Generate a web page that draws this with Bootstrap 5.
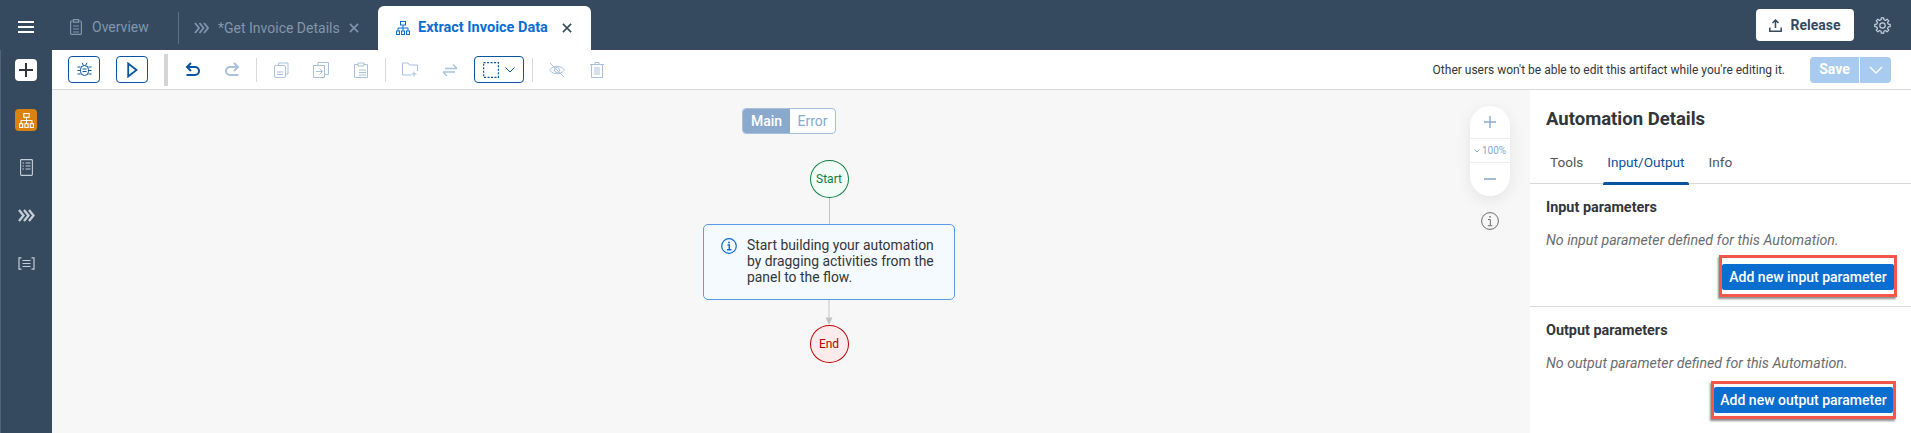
<!DOCTYPE html>
<html lang="en">
<head>
<meta charset="utf-8">
<title>Extract Invoice Data</title>
<link href="https://cdn.jsdelivr.net/npm/bootstrap@5.3.0/dist/css/bootstrap.min.css" rel="stylesheet">
<style>
html,body{height:433px;overflow:hidden}
body{font-family:Roboto,"Liberation Sans",sans-serif;background:#354a5f;color:#32363a;font-size:14px}
svg{display:block;flex:none}
.shell-top{height:50px;background:#354a5f;padding-right:20px}
.burger{width:70px;padding-left:18px;padding-top:4px}
.burger span{display:block;width:16px;height:2px;background:#fff;margin-bottom:3px}
.tab-item{height:50px;display:flex;align-items:center;color:#8196ad;font-size:14px;white-space:nowrap}
.tab-over{width:108px;gap:10px;padding-top:4px}
.tab-get{width:200px;padding-left:15px;border-left:1px solid #5b6f84;height:32px;margin-top:6px;gap:9px}
.tab-get .tx{width:122px}
.tab-live{width:213px;height:44px;margin-top:6px;background:#fff;border-radius:6px 6px 0 0;padding-left:18px;gap:8px;color:#0a6ed1;font-weight:700;align-self:flex-start}
.tab-live .tx{width:136px;color:#0a6ed1;font-size:14.5px}
.rel-btn{width:98px;height:32px;background:#fff;color:#354a5f;font-weight:700;font-size:14px;border:0;border-radius:4px;padding:0;gap:8px;margin-right:20px}
.rel-btn:hover{background:#fff;color:#354a5f}
.side{width:52px;border-left:1px solid #4f6479;padding-left:14px;padding-top:9px;height:383px;flex:none}
.side-plus{width:22px;height:22px;background:#fff;border-radius:4px;margin-bottom:28px}
.side-org{width:22px;height:22px;background:#d9820f;border-radius:4px;margin-bottom:28px}
.side-i{height:16px;width:22px;margin-bottom:32px}
.work{height:383px;background:#f7f7f7;min-width:0}
.tools{height:40px;background:#fff;border-bottom:1px solid #d9d9d9;padding-left:16px;padding-right:20px}
.tb-box{width:32px;height:27px;border:1px solid #0854a0;border-radius:4px;background:#fff;padding:0}
.tb-thick{width:4px;height:32px;background:#d5d5d5;margin:0 17px 0 16px}
.tb-sep{width:1px;height:24px;background:#d9d9d9}
.tb-dd{width:50px;height:27px;border:1px solid #0854a0;border-radius:4px;gap:6px;padding:0;background:#fff}
.sp-25{margin-right:25px}
.sp-24{margin-right:24px}
.sp-17{margin-right:17px}
.sp-16{margin-right:16px}
.sp-8{margin-right:8px}
.note{font-size:12px;margin-right:25px;white-space:nowrap;color:#32363a}
.sv-a{width:49px;height:26px;background:#a9cbef;color:#fff;font-weight:700;font-size:14px;border-radius:4px 0 0 4px}
.sv-b{width:31px;height:26px;background:#a9cbef;border-radius:0 4px 4px 0;margin-left:1px}
.below{height:343px}
.canvas{flex:1;background:#f7f7f7;padding-top:18px}
.seg{width:94px;height:26px;border:1px solid #a8c0dc;border-radius:4px;overflow:hidden;font-size:14px;background:#fff;margin-right:4px}
.seg-on{width:47px;background:#8aa9cd;color:#fff;font-weight:500}
.seg-off{flex:1;color:#8aa9cd}
.flow{margin-left:76px}
.node{width:39px;height:38px;border-radius:50%;font-size:12px;background:#fff}
.node-s{border:1px solid #107e3e;color:#107e3e;background:#f1fdf6;margin-top:26px}
.node-e{border:1px solid #bb0000;color:#bb0000;background:#ffebeb}
.wire{width:1px;height:26px;background:#c4c4c4}
.hint{width:252px;height:76px;border:1px solid #5b9ce6;border-radius:5px;background:#f5faff;padding:12px 17px;gap:10px;font-size:13.9px;line-height:16px;color:#32363a}
.hint svg{margin-top:1px}
.zoomer{position:absolute;left:1418px;top:16px;width:40px;height:90px;border-radius:20px;background:#fff;box-shadow:0 4px 16px rgba(0,0,0,.08);color:#8aa9cd}
.zoomer div{height:32px}
.zoomer .mid{height:25px;border-top:1px solid #eee;border-bottom:1px solid #eee;font-size:10px;gap:2px}
.zinfo{position:absolute;left:1429px;top:122px}
.panel{width:381px;background:#fff;box-shadow:-4px 0 0 #eff0f1;height:343px;flex:none}
.pn-title{font-size:18.5px;font-weight:700;padding:16px 16px 0;height:51px;line-height:26px}
.pn-tabs{height:43px;border-bottom:1px solid #d9d9d9;padding-left:20px;gap:24px;font-size:13.6px;color:#515559}
.pn-tab{height:43px;line-height:43px;position:relative}
.pn-tab-on{color:#0854a0}
.pn-tab-on::after{content:"";position:absolute;left:-4px;right:-4px;bottom:-1px;height:3px;background:#0854a0;border-radius:2px 2px 0 0}
.sec-a{height:123px;padding:14px 16px 0;border-bottom:1px solid #d9d9d9}
.sec-b{padding:14px 16px 0}
.sec-h{font-size:14.4px;font-weight:700;line-height:20px}
.sec-i{font-size:14.2px;font-style:italic;color:#6a6d70;line-height:20px;margin-top:12px;white-space:nowrap}
.add-wrap{border:3px solid #f5574a;box-shadow:-1px 2px 2px rgba(0,0,0,.45);background:#fff}
.wrap-a{margin-top:5px;width:178px;margin-right:-2px;padding:6px 0 4px}
.wrap-b{margin-top:8px;width:185px;margin-right:-1px;padding:3px 0 3px}
.add-btn{display:block;width:100%;height:26px;background:#0a6ed1;color:#fff;border:0;border-radius:2px;padding:0;font-size:14px;font-weight:500;white-space:nowrap}
.add-btn:hover{background:#0a6ed1;color:#fff}
</style>
</head>
<body>
<header class="shell-top d-flex align-items-center">
  <div class="burger"><span></span><span></span><span class="mb-0"></span></div>
  <div class="tab-item tab-over">
    <svg width="12" height="16" viewBox="0 0 12 16" fill="none" stroke="#8196ad" stroke-width="1.2"><rect x=".6" y="2" width="10.8" height="13.4" rx="1"/><rect x="3.5" y=".6" width="5" height="2.6" fill="#354a5f"/><path d="M3 7h6M3 10h6M3 13h6"/></svg>
    <span>Overview</span>
  </div>
  <div class="tab-item tab-get">
    <svg width="15" height="12" viewBox="0 0 15 12" fill="none" stroke="#8196ad" stroke-width="1.8"><path d="M1 1l4 5-4 5M5.500 1l4 5-4 5M10 1l4 5-4 5"/></svg>
    <span class="tx">*Get Invoice Details</span>
    <svg width="10" height="10" viewBox="0 0 11 11" stroke="#8196ad" stroke-width="1.7"><path d="M1 1l9 9M10 1l-9 9"/></svg>
  </div>
  <div class="tab-item tab-live">
    <svg width="14" height="14" viewBox="0 0 14 14" fill="none" stroke="#0a6ed1" stroke-width="1"><rect x="4.500" y=".5" width="5" height="3.500"/><path d="M7 4v3M2 10V7h10v3M7 7v3"/><rect x=".5" y="10" width="3" height="3.500"/><rect x="5.500" y="10" width="3" height="3.500"/><rect x="10.500" y="10" width="3" height="3.500"/></svg>
    <span class="tx">Extract Invoice Data</span>
    <svg width="10" height="10" viewBox="0 0 11 11" stroke="#354a5f" stroke-width="1.7"><path d="M1 1l9 9M10 1l-9 9"/></svg>
  </div>
  <div class="ms-auto d-flex align-items-center">
    <button type="button" class="btn rel-btn d-flex align-items-center justify-content-center">
      <svg width="13" height="13" viewBox="0 0 13 13" fill="none" stroke="#354a5f" stroke-width="1.5"><path d="M6.500 9V1.500M3.500 4l3-3 3 3M.8 8.500v3.700h11.400V8.500"/></svg>
      <span>Release</span>
    </button>
    <svg width="17" height="17" viewBox="0 0 24 24" fill="none" stroke="#c5d0dc" stroke-width="1.700" stroke-linejoin="round"><circle cx="12" cy="12" r="3.800"/><path d="M10 3.950L10.280 1.130H13.720L14 3.950L16.270 4.890L18.470 3.100L20.900 5.530L19.110 7.730L20.050 10L22.870 10.280V13.720L20.050 14L19.110 16.270L20.900 18.470L18.470 20.900L16.270 19.110L14 20.050L13.720 22.870H10.280L10 20.050L7.730 19.110L5.530 20.900L3.100 18.470L4.890 16.270L3.950 14L1.130 13.720V10.280L3.950 10L4.890 7.730L3.100 5.530L5.530 3.100L7.730 4.890Z"/></svg>
  </div>
</header>
<div class="d-flex">
  <nav class="side">
    <div class="side-plus d-flex align-items-center justify-content-center">
      <svg width="16" height="16" viewBox="0 0 16 16" stroke="#32363a" stroke-width="2"><path d="M8 1v14M1 8h14"/></svg>
    </div>
    <div class="side-org d-flex align-items-center justify-content-center">
      <svg width="15" height="15" viewBox="0 0 14 14" fill="none" stroke="#fff" stroke-width="1"><rect x="4.500" y=".5" width="5" height="3.500"/><path d="M7 4v3M2 10V7h10v3M7 7v3"/><rect x=".5" y="10" width="3" height="3.500"/><rect x="5.500" y="10" width="3" height="3.500"/><rect x="10.500" y="10" width="3" height="3.500"/></svg>
    </div>
    <div class="side-i d-flex align-items-center justify-content-center">
      <svg width="13" height="17" viewBox="0 0 13 17" fill="none" stroke="#c5ced8" stroke-width="1.100"><rect x=".6" y=".6" width="11.800" height="15.800" rx=".8"/><path d="M2.500 4h1.500M5.500 4h5M2.500 7h1.500M5.500 7h5M2.500 10h1.500M5.500 10h5"/></svg>
    </div>
    <div class="side-i d-flex align-items-center justify-content-center">
      <svg width="17" height="13" viewBox="0 0 17 13" fill="none" stroke="#c5ced8" stroke-width="2.300"><path d="M1 1l4.500 5.500L1 12M6 1l4.500 5.500L6 12M11 1l4.500 5.500L11 12"/></svg>
    </div>
    <div class="side-i d-flex align-items-center justify-content-center">
      <svg width="17" height="13" viewBox="0 0 17 13" fill="none" stroke="#c5ced8" stroke-width="1.200"><path d="M3.500 .8H1v11.400h2.500M13.500 .8H16v11.400h-2.500M4.500 3.500h8M4.500 6.500h8M4.500 9.500h8"/></svg>
    </div>
  </nav>
  <main class="work flex-grow-1 position-relative">
    <div class="tools d-flex align-items-center">
      <button type="button" class="btn tb-box d-flex align-items-center justify-content-center sp-16">
        <svg width="15" height="16" viewBox="0 0 15 16" fill="none" stroke="#0854a0" stroke-width="1"><rect x="3.500" y="3.500" width="8" height="10" rx="4"/><path d="M5 .8l1.500 2.700M10 .8L8.500 3.500M.5 5h3M.5 8.500h3M.5 12h3M11.500 5h3M11.500 8.500h3M11.500 12h3M5.500 7h4M5.500 9.500h4"/></svg>
      </button>
      <button type="button" class="btn tb-box d-flex align-items-center justify-content-center">
        <svg width="11" height="16" viewBox="0 0 11 16" fill="none" stroke="#0854a0" stroke-width="1.800"><path d="M1.200 1.500v13L9.500 8z"/></svg>
      </button>
      <div class="tb-thick"></div>
      <svg width="15" height="15" viewBox="0 0 15 15" fill="none" stroke="#0854a0" stroke-width="2" class="sp-25"><path d="M6 1L2 5l4 4M2 5h8a3.800 3.800 0 010 8H1.500"/></svg>
      <svg width="15" height="15" viewBox="0 0 15 15" fill="none" stroke="#a9c1dc" stroke-width="2" class="sp-16"><path d="M9 1l4 4-4 4M13 5H5a3.800 3.800 0 000 8h8.500"/></svg>
      <div class="tb-sep sp-17"></div>
      <svg width="15" height="16" viewBox="0 0 15 16" fill="none" stroke="#a9c1dc" class="sp-24"><path d="M4.500 3V1h9.500v11h-2"/><rect x=".5" y="3.500" width="11" height="12" rx="1.500"/><path d="M3 10h6M3 12.500h6"/></svg>
      <svg width="16" height="16" viewBox="0 0 16 16" fill="none" stroke="#a9c1dc" class="sp-25"><path d="M5 3V.5h10.500v12H12M.5 3.500h11v12H.5zM3 9.500h6M6.500 6.500l3 3-3 3"/></svg>
      <svg width="14" height="16" viewBox="0 0 14 16" fill="none" stroke="#a9c1dc" class="sp-17"><path d="M4 2.500H.5v13H13.500v-13H10M4 1h6v3H4zM5 8h7M5 10.500h7M5 13h7"/></svg>
      <div class="tb-sep sp-16"></div>
      <svg width="16" height="15" viewBox="0 0 16 15" fill="none" stroke="#a9c1dc" class="sp-24"><path d="M9 13H.5V1H6l1.500 2h8v6M12 9.500v5M9.500 12h5"/></svg>
      <svg width="16" height="14" viewBox="0 0 16 14" fill="none" stroke="#a9c1dc" stroke-width="1.300" class="sp-16"><path d="M3 5.500h12M11 1.500l4 4M13 9H1M5 13L1 9"/></svg>
      <button type="button" class="btn tb-dd d-flex align-items-center justify-content-center sp-8">
        <svg width="16" height="16" viewBox="0 0 16 16" fill="none" stroke="#0854a0" stroke-width="1.200" stroke-dasharray="2 1.500"><rect x=".6" y=".6" width="14.800" height="14.800"/></svg>
        <svg width="10" height="6" viewBox="0 0 10 6" fill="none" stroke="#0854a0"><path d="M.5.500l4.500 4.500L9.500.500"/></svg>
      </button>
      <div class="tb-sep sp-16"></div>
      <svg width="16" height="16" viewBox="0 0 16 16" fill="none" stroke="#a9c1dc" class="sp-25"><path d="M.5 8c4-5 11-5 15 0-4 5-11 5-15 0zM1 1l14 14"/><circle cx="8" cy="8" r="2.500"/></svg>
      <svg width="14" height="16" viewBox="0 0 14 16" fill="none" stroke="#a9c1dc"><path d="M0 2.500h14M5 2.500V.5h4v2M1.500 2.500v13h11v-13M5 5v8M7 5v8M9 5v8"/></svg>
      <span class="note ms-auto">Other users won't be able to edit this artifact while you're editing it.</span>
      <div class="sv-a d-flex align-items-center justify-content-center">Save</div>
      <div class="sv-b d-flex align-items-center justify-content-center">
        <svg width="14" height="8" viewBox="0 0 14 8" fill="none" stroke="#fff" stroke-width="1.400"><path d="M1 1l6 6 6-6"/></svg>
      </div>
    </div>
    <div class="below d-flex">
      <section class="canvas d-flex flex-column align-items-center position-relative">
        <div class="seg d-flex">
          <div class="seg-on d-flex align-items-center justify-content-center">Main</div>
          <div class="seg-off d-flex align-items-center justify-content-center">Error</div>
        </div>
        <div class="flow d-flex flex-column align-items-center">
          <div class="node node-s d-flex align-items-center justify-content-center">Start</div>
          <div class="wire"></div>
          <div class="hint d-flex">
            <svg width="16" height="16" viewBox="0 0 16 16" fill="none" stroke="#0a6ed1" stroke-width="1.200"><circle cx="8" cy="8" r="7.300"/><path d="M6.500 7h1.800v4.500M6 11.800h4.500" stroke-width="1.400"/><circle cx="8" cy="4.500" r=".9" fill="#0a6ed1" stroke="none"/></svg>
            <span>Start building your automation by dragging activities from the panel to the flow.</span>
          </div>
          <svg width="10" height="25" viewBox="0 0 10 25"><path d="M5 0v19" stroke="#c4c4c4"/><path d="M1.500 17.500h7L5 25z" fill="#c4c4c4"/></svg>
          <div class="node node-e d-flex align-items-center justify-content-center">End</div>
        </div>
        <div class="zoomer">
          <div class="d-flex align-items-center justify-content-center"><svg width="12" height="12" viewBox="0 0 12 12" stroke="#8aa9cd" stroke-width="1.400"><path d="M6 0v12M0 6h12"/></svg></div>
          <div class="mid d-flex align-items-center justify-content-center"><svg width="6" height="4" viewBox="0 0 6 4" fill="none" stroke="#8aa9cd"><path d="M.5.500L3 3 5.500.5"/></svg><span>100%</span></div>
          <div class="d-flex align-items-center justify-content-center"><svg width="12" height="2" viewBox="0 0 12 2" stroke="#8aa9cd" stroke-width="1.600"><path d="M0 1h12"/></svg></div>
        </div>
        <svg class="zinfo" width="18" height="18" viewBox="0 0 18 18" fill="none" stroke="#6a6d70"><circle cx="9" cy="9" r="8.400"/><path d="M7 7.500h2.300v6M6.800 13.700h4.500"/><circle cx="9" cy="4.800" r=".9" fill="#6a6d70" stroke="none"/></svg>
      </section>
      <aside class="panel">
        <div class="pn-title">Automation Details</div>
        <div class="pn-tabs d-flex">
          <div class="pn-tab">Tools</div>
          <div class="pn-tab pn-tab-on">Input/Output</div>
          <div class="pn-tab">Info</div>
        </div>
        <div class="sec-a">
          <div class="sec-h">Input parameters</div>
          <div class="sec-i">No input parameter defined for this Automation.</div>
          <div class="d-flex justify-content-end"><div class="add-wrap wrap-a"><button type="button" class="btn add-btn">Add new input parameter</button></div></div>
        </div>
        <div class="sec-b">
          <div class="sec-h">Output parameters</div>
          <div class="sec-i">No output parameter defined for this Automation.</div>
          <div class="d-flex justify-content-end"><div class="add-wrap wrap-b"><button type="button" class="btn add-btn">Add new output parameter</button></div></div>
        </div>
      </aside>
    </div>
  </main>
</div>
</body>
</html>
